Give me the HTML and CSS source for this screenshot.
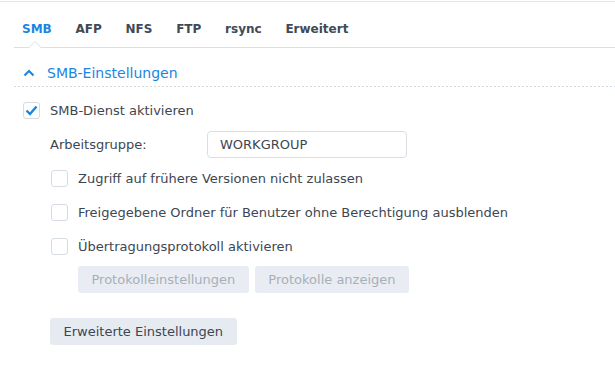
FILE: index.html
```html
<!DOCTYPE html>
<html lang="de">
<head>
    <meta charset="UTF-8">
    <meta name="viewport" content="width=device-width, initial-scale=1.0">
    <title>SMB</title>
    <link rel="stylesheet" href="styles.css">
</head>
<body>
    <div class="page">
        <div class="tabs">
            <span class="tab active">SMB</span>
            <span class="tab">AFP</span>
            <span class="tab">NFS</span>
            <span class="tab">FTP</span>
            <span class="tab">rsync</span>
            <span class="tab">Erweitert</span>
        </div>

        <div class="section-header">
            <svg class="chevron" width="12" height="8" viewBox="0 0 12 8">
                <polyline points="1.5,6.5 6,2 10.5,6.5" fill="none" stroke="#1a86e3" stroke-width="2"/>
            </svg>
            <span>SMB-Einstellungen</span>
        </div>

        <div class="form">
            <label class="row">
                <span class="checkbox checked">
                    <svg width="13" height="11" viewBox="0 0 13 11">
                        <polyline points="1.5,5.5 5,9 11.5,1.5" fill="none" stroke="#1a86e3" stroke-width="2.4"/>
                    </svg>
                </span>
                SMB-Dienst aktivieren
            </label>

            <div class="row workgroup">
                <span class="field-label">Arbeitsgruppe:</span>
                <input class="text-input" type="text" value="WORKGROUP">
            </div>

            <label class="row indent">
                <span class="checkbox"></span>
                Zugriff auf frühere Versionen nicht zulassen
            </label>

            <label class="row indent">
                <span class="checkbox"></span>
                Freigegebene Ordner für Benutzer ohne Berechtigung ausblenden
            </label>

            <label class="row indent">
                <span class="checkbox"></span>
                Übertragungsprotokoll aktivieren
            </label>

            <div class="button-row">
                <button class="btn" disabled>Protokolleinstellungen</button>
                <button class="btn" disabled>Protokolle anzeigen</button>
            </div>

            <div class="advanced">
                <button class="btn">Erweiterte Einstellungen</button>
            </div>
        </div>
    </div>
</body>
</html>
```

FILE: styles.css
```css
/* General */
body {
    margin: 0;
    padding-top: 1px;
    font-family: "DejaVu Sans", Verdana, sans-serif;
    font-size: 13px;
    color: #3d4653;
    background-color: #ffffff;
}

.page {
    border-top: 1px solid #e4e7ea;
}

/* Tabs */
.tabs {
    display: flex;
    gap: 23.75px;
    height: 45px;
    margin-left: 14px;
    padding-left: 8px;
    border-bottom: 1px solid #d9e0e8;
}

.tab {
    position: relative;
    padding-top: 20px;
    line-height: 14px;
    font-size: 12px;
    font-weight: bold;
    color: #404a56;
}

.tab.active {
    color: #1a86e3;
}

/* little notch under the active tab */
.tab.active::before,
.tab.active::after {
    content: "";
    position: absolute;
    left: 50%;
    bottom: -1px;
    width: 0;
    height: 0;
    border-style: solid;
    border-color: transparent;
}

.tab.active::before {
    margin-left: -9px;
    border-width: 0 7px 7px 7px;
    border-bottom-color: #d9e0e8;
}

.tab.active::after {
    margin-left: -8px;
    border-width: 0 6px 6px 6px;
    border-bottom-color: #ffffff;
}

/* Section header */
.section-header {
    display: flex;
    align-items: center;
    margin-left: 14px;
    padding: 16px 0 5px 9px;
    line-height: 18px;
    font-size: 14px;
    color: #1a86e3;
    background-image: linear-gradient(to right, #d3dbe4 50%, transparent 50%);
    background-size: 4px 1px;
    background-repeat: repeat-x;
    background-position: left bottom;
}

.chevron {
    margin-right: 12px;
}

/* Form */
.form {
    padding: 6px 0 0 23px;
}

.row {
    display: flex;
    align-items: center;
    height: 34px;
}

.row.indent {
    margin-left: 28px;
}

.row.workgroup {
    margin-left: 27px;
}

.checkbox {
    display: flex;
    align-items: center;
    justify-content: center;
    box-sizing: border-box;
    width: 17px;
    height: 17px;
    margin-right: 10px;
    border: 1px solid #d6dce3;
    border-radius: 3px;
    background-color: #ffffff;
}

.field-label {
    width: 157px;
}

.text-input {
    box-sizing: border-box;
    width: 200px;
    height: 27px;
    margin: 0;
    padding: 0 12px;
    border: 1px solid #d8dee6;
    border-radius: 4px;
    font-family: inherit;
    font-size: 13px;
    color: #3d4653;
}

/* Buttons */
.button-row {
    display: flex;
    gap: 6px;
    margin: 3px 0 0 55px;
}

.btn {
    height: 27px;
    padding: 0 13.5px;
    border: none;
    border-radius: 3px;
    background-color: #e6ebf2;
    font-family: inherit;
    font-size: 13px;
    color: #3d4653;
}

.btn:disabled {
    background-color: #e9edf3;
    color: #a7afb8;
}

.advanced {
    margin: 25px 0 0 27px;
}
```
